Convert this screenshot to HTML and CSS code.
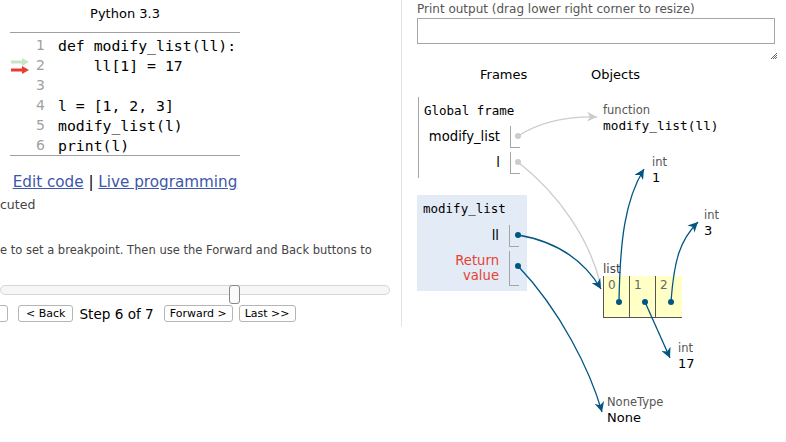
FILE: index.html
```html
<!DOCTYPE html>
<html>
<head>
<meta charset="utf-8">
<link rel="stylesheet" href="styles.css">
</head>
<body>
<div class="page">
  <div class="left">
    <div class="lang">Python 3.3</div>
    <div class="code">
      <div class="line"><span class="gut"></span><span class="ln">1</span><span class="src">def modify_list(ll):</span></div>
      <div class="line"><span class="gut"><svg width="20" height="20" viewBox="0 0 20 20"><path d="M1 4.5 H12 V2 L19 6 L12 10 V7.5 H1 Z" fill="#c8e5c8"/><path d="M1 12.5 H12 V10 L19 14 L12 18 V15.5 H1 Z" fill="#e53e30"/></svg></span><span class="ln">2</span><span class="src">    ll[1] = 17</span></div>
      <div class="line"><span class="gut"></span><span class="ln">3</span><span class="src"></span></div>
      <div class="line"><span class="gut"></span><span class="ln">4</span><span class="src">l = [1, 2, 3]</span></div>
      <div class="line"><span class="gut"></span><span class="ln">5</span><span class="src">modify_list(l)</span></div>
      <div class="line"><span class="gut"></span><span class="ln">6</span><span class="src">print(l)</span></div>
    </div>
    <div class="links"><a href="#">Edit code</a> | <a href="#">Live programming</a></div>
    <div class="note">cuted</div>
    <div class="help">e to set a breakpoint. Then use the Forward and Back buttons to</div>
    <div class="slider"><div class="track"></div><div class="handle"></div></div>
    <div class="nav">
      <button class="btn first">&lt;&lt; First</button>
      <button class="btn back">&lt; Back</button>
      <span class="step">Step 6 of 7</span>
      <button class="btn fwd">Forward &gt;</button>
      <button class="btn">Last &gt;&gt;</button>
    </div>
  </div>
  <div class="right">
    <div class="plabel">Print output (drag lower right corner to resize)</div>
    <div class="pbox"></div>
    <div class="grip"><svg width="8" height="8" viewBox="0 0 8 8"><path d="M7 1 L1 7 M7 3 L3 7 M7 5 L5 7" stroke="#666" stroke-width="1"/></svg></div>
    <div class="heads"><span class="h-frames">Frames</span><span class="h-objects">Objects</span></div>
    <div class="viz">
      <div class="frames">
        <div class="frame global">
          <div class="ftitle">Global frame</div>
          <div class="vrow"><span class="vname">modify_list</span><span class="vval"></span></div>
          <div class="vrow"><span class="vname">l</span><span class="vval"></span></div>
        </div>
        <div class="frame local">
          <div class="ftitle">modify_list</div>
          <div class="vrow"><span class="vname">ll</span><span class="vval"></span></div>
          <div class="vrow tall"><span class="vname ret">Return<br>value</span><span class="vval"></span></div>
        </div>
      </div>
      <div class="obj o-func"><div class="otype">function</div><div class="oval mono">modify_list(ll)</div></div>
      <div class="obj o-int1"><div class="otype">int</div><div class="oval">1</div></div>
      <div class="obj o-int3"><div class="otype">int</div><div class="oval">3</div></div>
      <div class="obj o-list"><div class="otype">list</div>
        <div class="cells"><div class="cell">0</div><div class="cell">1</div><div class="cell">2</div></div>
      </div>
      <div class="obj o-int17"><div class="otype">int</div><div class="oval">17</div></div>
      <div class="obj o-none"><div class="otype">NoneType</div><div class="oval">None</div></div>
    </div>
  </div>
</div>
<svg class="arrows" width="786" height="442" viewBox="0 0 786 442">
  <defs>
    <marker id="ab" markerWidth="12" markerHeight="10" refX="10" refY="5" orient="auto" markerUnits="userSpaceOnUse">
      <path d="M0 0 L10 5 L0 10 L3 5 Z" fill="#005583"/>
    </marker>
    <marker id="ag" markerWidth="12" markerHeight="10" refX="10" refY="5" orient="auto" markerUnits="userSpaceOnUse">
      <path d="M0 0 L10 5 L0 10 L3 5 Z" fill="#cccccc"/>
    </marker>
  </defs>
  <g fill="none" stroke-width="1.3">
    <path d="M518 136 C540 122 565 116 597 117" stroke="#cccccc" marker-end="url(#ag)"/>
    <path d="M518 162 C560 195 590 240 601 286" stroke="#cccccc"/>
    <path d="M518 235 C560 242 585 262 601 289" stroke="#005583" marker-end="url(#ab)"/>
    <path d="M619 302 C620 240 625 200 644 169" stroke="#005583" marker-end="url(#ab)"/>
    <path d="M671 302 C674 260 680 240 698 222" stroke="#005583" marker-end="url(#ab)"/>
    <path d="M645 302 L670 358" stroke="#005583" marker-end="url(#ab)"/>
    <path d="M518 266 C560 310 590 370 602 412" stroke="#005583" marker-end="url(#ab)"/>
  </g>
  <g>
    <circle cx="518" cy="136" r="3" fill="#cccccc"/>
    <circle cx="518" cy="162" r="3" fill="#cccccc"/>
    <circle cx="518" cy="235" r="3" fill="#005583"/>
    <circle cx="518" cy="266" r="3" fill="#005583"/>
    <circle cx="619" cy="302" r="3" fill="#005583"/>
    <circle cx="645" cy="302" r="3" fill="#005583"/>
    <circle cx="671" cy="302" r="3" fill="#005583"/>
  </g>
</svg>
</body>
</html>
```
FILE: styles.css
```css
html, body { margin: 0; padding: 0; background: #fff; }
body { font-family: "DejaVu Sans", Verdana, sans-serif; color: #000; position: relative; width: 786px; height: 442px; overflow: hidden; }
.page { display: flex; }
.left { width: 401px; flex: none; }
.right { flex: 1; border-left: 1px solid #e2e2e2; height: 326px; padding-left: 15px; position: relative; }

.lang { width: 230px; margin-left: 10px; text-align: center; font-size: 13px; line-height: 16px; padding-top: 6px; height: 32px; box-sizing: border-box; }
.code { width: 230px; margin-left: 10px; border-top: 1px solid #a0a0a0; border-bottom: 1px solid #a0a0a0; padding-top: 2px; height: 124px; box-sizing: border-box; }
.line { display: flex; height: 20px; align-items: center; }
.gut { width: 20px; height: 20px; flex: none; display: flex; }
.gut svg { display: block; margin-top: 1px; }
.ln { width: 15px; text-align: right; color: #a0a0a0; font-size: 14px; flex: none; }
.src { font-family: "DejaVu Sans Mono", monospace; font-size: 14.8px; white-space: pre; margin-left: 13px; }

.links { width: 230px; margin-left: 10px; text-align: center; font-size: 15.2px; margin-top: 16px; line-height: 20px; color: #000; }
.links a { color: #3d58a8; }
.note { font-size: 12.5px; color: #444; margin-top: 5px; line-height: 16px; }
.help { font-size: 11.5px; color: #444; margin-top: 29px; line-height: 16px; white-space: nowrap; }
.slider { position: relative; margin-top: 27px; height: 18px; }
.track { margin-top: 4px; width: 390px; height: 10px; border: 1px solid #d6d6d6; border-radius: 5px; background: #f6f6f6; box-sizing: border-box; }
.handle { position: absolute; left: 229px; top: 0; width: 11px; height: 19px; border: 1px solid #888; border-radius: 3px; background: #fafafa; box-sizing: border-box; }
.nav { display: flex; align-items: center; margin-top: 2px; }
.btn { font-family: "DejaVu Sans", Verdana, sans-serif; font-size: 11px; height: 17px; padding: 0 5px; border: 1px solid #b5b5b5; border-radius: 3px; background: #fff; color: #000; line-height: 14px; margin: 0 9px 0 0; }
.btn.first { margin-left: -56px; width: 64px; margin-right: 10px; }
.btn.back { padding: 0 7px; }
.btn.fwd { margin-right: 6px; }
.step { font-size: 13.6px; margin: 0 10px 0 -3px; }

.plabel { font-size: 12px; color: #555; line-height: 16px; margin-top: 1px; }
.pbox { width: 358px; height: 26px; border: 1px solid #a5a5a5; box-sizing: border-box; margin-top: 1px; }
.grip { position: absolute; top: 45px; right: 8px; }
.heads { position: relative; height: 20px; margin-top: 23px; font-size: 13px; }
.h-frames { position: absolute; left: 63px; top: 0; }
.h-objects { position: absolute; left: 174px; top: 0; }

.viz { position: relative; margin-top: 10px; height: 330px; }
.frames { display: flex; flex-direction: column; gap: 17px; }
.frame { width: 110px; box-sizing: border-box; }
.global { margin-left: 1px; border-left: 1px solid #a5a5a5; height: 81px; padding-top: 6px; }
.local { background: #e2ebf6; height: 96px; padding-top: 6px; }
.ftitle { font-family: "DejaVu Sans Mono", monospace; font-size: 12.5px; padding-left: 6px; line-height: 16px; margin-bottom: 8px; }
.global .ftitle { padding-left: 5px; margin-bottom: 7px; }
.vrow { display: flex; height: 22px; margin-bottom: 4px; }
.vrow.tall { height: 35px; }
.vname { width: 92px; text-align: right; font-size: 13.2px; padding-right: 10px; box-sizing: border-box; line-height: 16px; align-self: center; flex: none; }
.global .vname { width: 91px; }
.ret { color: #e93f34; line-height: 15px; margin-top: -2px; }
.vval { width: 9px; border-left: 1px solid #a5a5a5; border-bottom: 1px solid #a5a5a5; }

.obj { position: absolute; }
.otype { font-size: 11.5px; color: #555; line-height: 14px; }
.oval { font-size: 13px; line-height: 17px; }
.oval.mono { font-family: "DejaVu Sans Mono", monospace; font-size: 12.8px; }
.o-func { left: 186px; top: 6px; }
.o-int1 { left: 235px; top: 58px; }
.o-int3 { left: 287px; top: 111px; }
.o-int17 { left: 261px; top: 244px; }
.o-none { left: 190px; top: 298px; }
.o-list { left: 186px; top: 165px; }
.o-list .otype { color: #444; font-size: 12px; }
.cells { display: flex; background: #ffffc6; border-left: 1px solid #555; border-bottom: 1px solid #555; height: 42px; box-sizing: border-box; }
.cell { width: 26px; box-sizing: border-box; border-right: 1px solid #555; font-size: 12px; color: #666; padding: 2px 0 0 4px; line-height: 14px; }
.cell:last-child { border-right: none; }

.arrows { position: absolute; left: 0; top: 0; pointer-events: none; }
```
